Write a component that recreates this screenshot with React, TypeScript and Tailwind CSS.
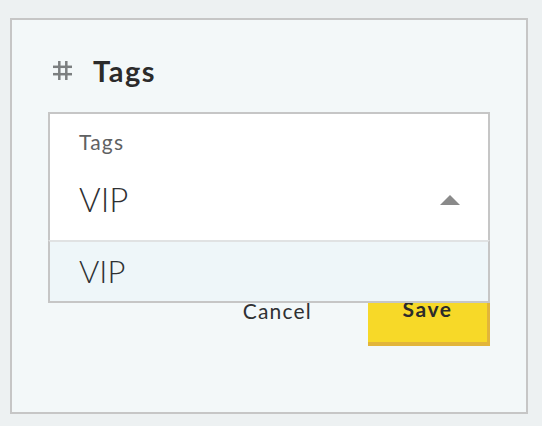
import React, { useState } from 'react';

const font = { fontFamily: 'Lato, "Open Sans", sans-serif' };

// Small hash glyph drawn next to the section title
const HashIcon: React.FC = () => (
  <svg
    className="w-[19px] h-[19px] shrink-0"
    width="19"
    height="19"
    viewBox="0 0 19 19"
    fill="none"
    stroke="#7b7f80"
    strokeWidth="2.5"
  >
    <line x1="6.3" y1="0" x2="6.3" y2="19" />
    <line x1="13.3" y1="0" x2="13.3" y2="19" />
    <line x1="0" y1="5.8" x2="19" y2="5.8" />
    <line x1="0" y1="13.2" x2="19" y2="13.2" />
  </svg>
);

const App: React.FC = () => {
  const [open, setOpen] = useState(true);
  const [value, setValue] = useState('VIP');
  const options = ['VIP'];

  return (
    <div className="w-[542px] h-[426px] bg-[#edf1f2] pt-[18px] pl-[10px]" style={font}>
      <div className="w-[518px] h-[396px] border-2 border-[#c6c6c6] bg-[#f3f8f9] px-9">
        {/* Section header */}
        <div className="flex items-center h-[30px] mt-[35px] pl-[5px]">
          <HashIcon />
          <h2 className="ml-[21px] text-[29px] leading-none font-bold tracking-[1.5px] text-[#2b2b2b]">Tags</h2>
        </div>

        {/* Tag select */}
        <div className="relative mt-[27px]">
          <div
            className="h-[128px] border-2 border-b-0 border-[#c6c6c6] bg-white pl-[29px] pr-[28px] cursor-pointer"
            onClick={() => setOpen(!open)}
          >
            <div className="pt-[16px] text-[21px] leading-[24px] tracking-[1.2px] text-[#5f6162]">Tags</div>
            <div className="flex items-center justify-between mt-[25px]">
              <span className="text-[33px] leading-[40px] font-light text-[#2f3133]">{value}</span>
              <span className="w-0 h-0 border-x-[10px] border-x-transparent border-b-[10px] border-b-[#8a8a8a] mt-[2px]" />
            </div>
          </div>

          {open && (
            <ul className="absolute left-0 right-0 top-full z-10 border-2 border-t-2 border-[#c6c6c6] border-t-[#e0e2e3] bg-[#eef6f9]">
              {options.map((opt) => (
                <li
                  key={opt}
                  className="h-[59px] flex items-center pl-[29px] text-[31px] font-light text-[#2f3133] cursor-pointer"
                  onClick={() => {
                    setValue(opt);
                    setOpen(false);
                  }}
                >
                  {opt}
                </li>
              ))}
            </ul>
          )}
        </div>

        {/* Form actions */}
        <div className="flex items-center justify-end mt-[35px]">
          <button className="mr-[56px] text-[21px] tracking-[1.2px] text-[#2f3133]">Cancel</button>
          <button className="w-[122px] h-[71px] bg-[#f7d928] border-r-[3px] border-b-[4px] border-[#e2b53a] text-[21px] font-bold tracking-[1.5px] text-[#2b2b2b]">
            Save
          </button>
        </div>
      </div>
    </div>
  );
};

export default App;
